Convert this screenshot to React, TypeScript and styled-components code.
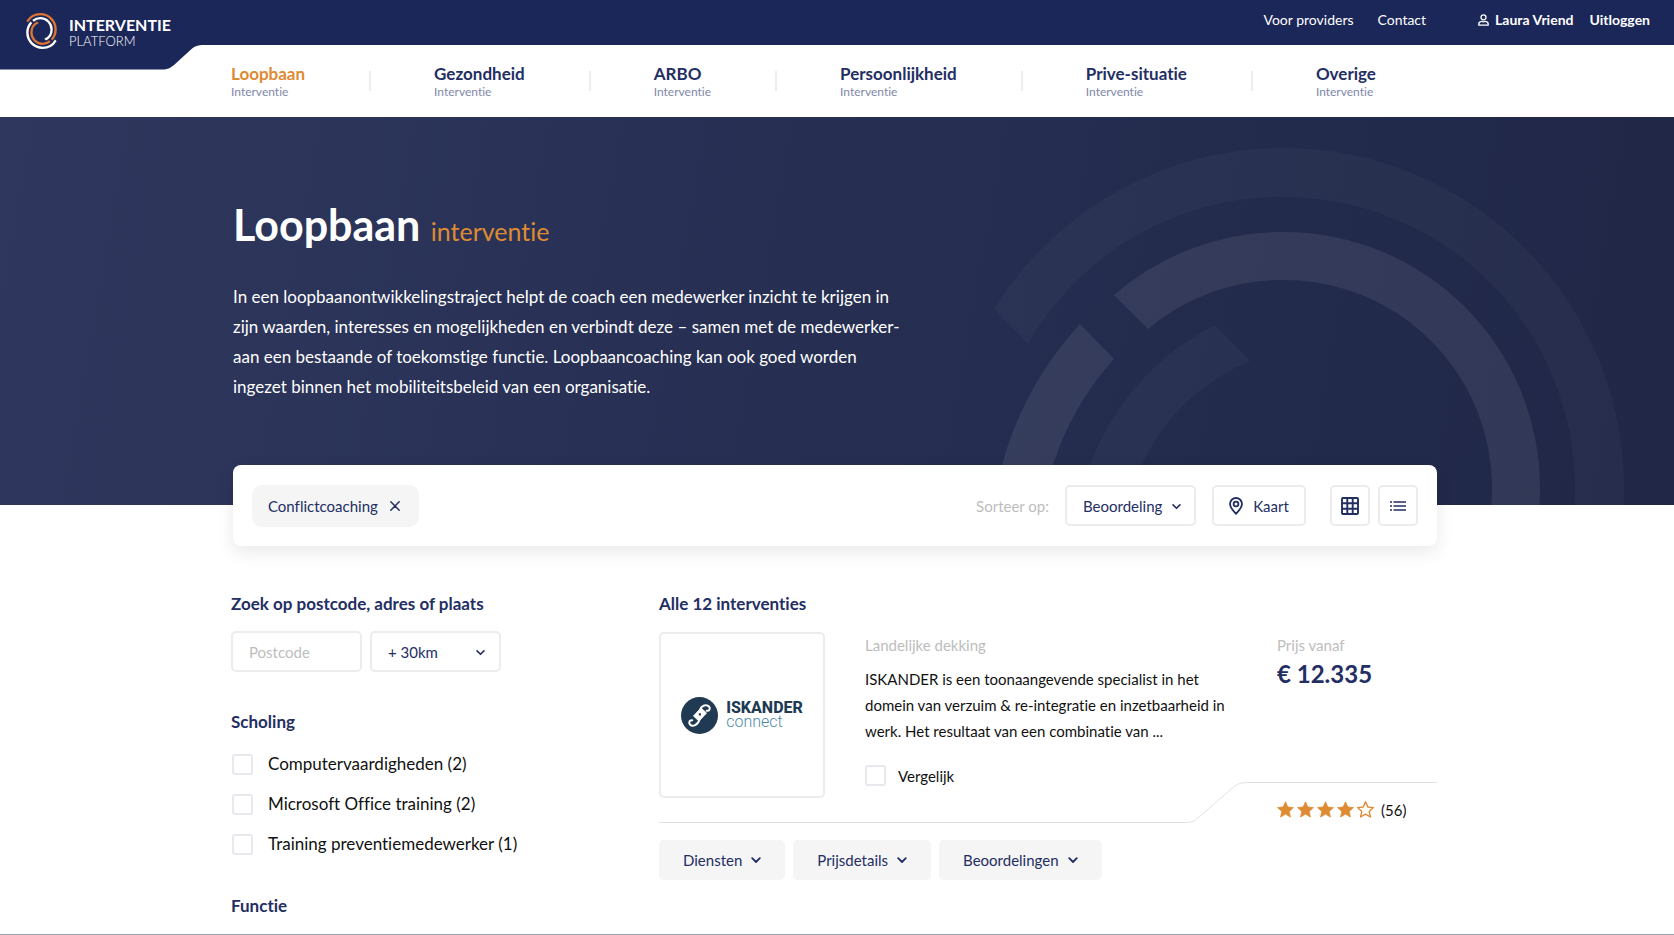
import React from 'react';
import styled, { createGlobalStyle } from 'styled-components';

const navy = '#1b2659';
const ink = '#232e63';
const orange = '#de8b33';
const muted = '#bdbdbd';
const line = '#ececee';
const soft = '#f5f5f5';

const GlobalStyle = createGlobalStyle`
  *, *::before, *::after { box-sizing: border-box; }
  body {
    margin: 0;
    background: #fff;
    color: #111;
    font-family: Lato, "Liberation Sans", sans-serif;
    font-size: 15px;
    line-height: 20px;
    font-variant-ligatures: none;
  }
  h1, h2, p, ul { margin: 0; padding: 0; }
  ul { list-style: none; }
  a { color: inherit; text-decoration: none; }
  button, input, select { font: inherit; color: inherit; margin: 0; }
  button, select { cursor: pointer; }
  svg { display: block; flex: none; }
`;

const Page = styled.div`
  min-height: 100vh;
  border-bottom: 1px solid #9aa2ab;
`;

/* ---------- header ---------- */

const TopBar = styled.header`
  position: relative;
  display: flex;
  justify-content: space-between;
  align-items: flex-start;
  height: 45px;
  padding: 0 24px 0 26px;
  background: ${navy};
  color: #fff;
`;

const TabShape = styled.svg`
  position: absolute;
  left: 0;
  top: 44px;
  fill: ${navy};
`;

const Brand = styled.a`
  position: relative;
  display: flex;
  align-items: flex-start;
  gap: 12px;
  padding-top: 13px;
`;

const BrandName = styled.span`
  display: flex;
  flex-direction: column;
  padding-top: 3px;
  font-size: 13px;
  line-height: 17px;
  font-weight: 300;
  strong {
    font-size: 16px;
    font-weight: 700;
  }
`;

const UserNav = styled.nav`
  display: flex;
  align-items: center;
  height: 40px;
  gap: 52px;
  font-size: 14px;
`;

const UserLinks = styled.div<{ $bold?: boolean }>`
  display: flex;
  gap: ${p => (p.$bold ? 16 : 24)}px;
  font-weight: ${p => (p.$bold ? 700 : 400)};
`;

const UserLink = styled.a`
  display: flex;
  align-items: center;
  gap: 6px;
`;

const MainNav = styled.nav`
  height: 72px;
  padding: 0 237px 0 231px;
  background: #fff;
`;

const NavList = styled.ul`
  display: flex;
  align-items: center;
  padding-top: 19px;
`;

const NavItem = styled.li`
  display: flex;
  align-items: center;
  &:not(:last-child)::after {
    content: '';
    width: 2px;
    height: 20px;
    margin: 0 63px 2px 64px;
    background: #ededed;
  }
`;

const NavLink = styled.a<{ $active?: boolean }>`
  display: flex;
  flex-direction: column;
  font-size: 17px;
  line-height: 20px;
  font-weight: 700;
  color: ${p => (p.$active ? orange : ink)};
  small {
    font-size: 12px;
    line-height: 16px;
    font-weight: 400;
    color: #7f88ab;
  }
`;

/* ---------- hero ---------- */

const Hero = styled.section`
  position: relative;
  overflow: hidden;
  padding: 82px 237px 103px 233px;
  background: linear-gradient(100deg, #2f375e 0%, #262f52 50%, #202747 100%);
  color: #fff;
`;

const HeroRings = styled.svg`
  position: absolute;
  right: 50px;
  top: 31px;
  width: 634px;
  height: 746px;
`;

const HeroBody = styled.div`
  position: relative;
  display: flex;
  flex-direction: column;
  gap: 31px;
`;

const HeroTitle = styled.h1`
  font-size: 43px;
  line-height: 52px;
  font-weight: 700;
  span {
    font-size: 25px;
    line-height: 30px;
    font-weight: 400;
    color: ${orange};
  }
`;

const HeroText = styled.p`
  max-width: 680px;
  font-size: 17px;
  line-height: 30px;
`;

/* ---------- filter bar ---------- */

const FilterBar = styled.section`
  position: relative;
  display: flex;
  align-items: center;
  justify-content: space-between;
  min-height: 81px;
  margin: -40px 237px 0 233px;
  padding: 0 19px;
  border-radius: 8px;
  background: #fff;
  box-shadow: 0 6px 18px rgba(0, 0, 0, 0.09);
`;

const Chip = styled.button`
  display: flex;
  align-items: center;
  gap: 12px;
  height: 42px;
  padding: 0 19px 0 16px;
  border: 0;
  border-radius: 10px;
  background: ${soft};
  color: ${ink};
`;

const SortGroup = styled.div`
  display: flex;
  align-items: center;
  gap: 16px;
`;

const SortLabel = styled.label`
  color: ${muted};
`;

const ViewGroup = styled.div`
  display: flex;
  gap: 8px;
  margin-left: 8px;
`;

const OutlineButton = styled.button<{ $square?: boolean }>`
  display: flex;
  align-items: center;
  justify-content: center;
  gap: 10px;
  width: ${p => (p.$square ? 40 : 94)}px;
  height: 41px;
  padding: 0;
  border: 2px solid ${line};
  border-radius: 5px;
  background: #fff;
  color: ${ink};
`;

const SelectWrap = styled.div<{ $chevronRight: number }>`
  position: relative;
  width: 131px;
  color: ${ink};
  svg {
    position: absolute;
    right: ${p => p.$chevronRight}px;
    top: 17px;
    pointer-events: none;
  }
`;

const Select = styled.select`
  appearance: none;
  width: 100%;
  height: 41px;
  padding: 0 16px;
  border: 2px solid ${line};
  border-radius: 5px;
  background: #fff;
`;

/* ---------- content ---------- */

const Content = styled.div`
  display: flex;
  padding: 46px 237px 0 231px;
`;

const Sidebar = styled.aside`
  flex: 0 0 428px;
`;

const Results = styled.main`
  flex: 1;
  min-width: 0;
`;

const Heading = styled.h2`
  font-size: 17px;
  line-height: 24px;
  font-weight: 700;
  color: ${ink};
`;

const LocationRow = styled.div`
  display: flex;
  gap: 8px;
  margin: 15px 0 38px;
`;

const TextInput = styled.input`
  width: 131px;
  height: 41px;
  padding: 0 16px;
  border: 2px solid ${line};
  border-radius: 5px;
  background: #fff;
  &::placeholder {
    color: ${muted};
    opacity: 1;
  }
`;

const CheckList = styled.ul`
  padding: 10px 0 30px 1px;
`;

const CheckLabel = styled.label<{ $compact?: boolean }>`
  display: flex;
  align-items: center;
  gap: ${p => (p.$compact ? 12 : 15)}px;
  height: ${p => (p.$compact ? 21 : 40)}px;
  font-size: ${p => (p.$compact ? 15 : 17)}px;
`;

const CheckBox = styled.input`
  appearance: none;
  width: 21px;
  height: 21px;
  border: 2px solid #e8e8ee;
  border-radius: 3px;
  background: #fff;
  &:checked {
    background: ${ink};
  }
`;

const Card = styled.article`
  margin-top: 16px;
`;

const CardTop = styled.div`
  display: flex;
`;

const LogoBox = styled.div`
  display: flex;
  align-items: center;
  justify-content: center;
  gap: 8px;
  flex: 0 0 166px;
  height: 166px;
  border: 2px solid ${line};
  border-radius: 5px;
  font-family: Roboto, sans-serif;
`;

const LogoName = styled.div`
  display: flex;
  flex-direction: column;
  font-size: 16px;
  line-height: 14px;
  font-weight: 300;
  color: #4f8ba6;
  strong {
    font-weight: 800;
    color: #203a54;
  }
`;

const Summary = styled.div`
  flex: 1;
  padding: 3px 40px 0;
`;

const Caption = styled.p`
  color: ${muted};
`;

const Description = styled.p`
  max-width: 370px;
  margin: 11px 0 21px;
  line-height: 26px;
`;

const PriceBlock = styled.div`
  flex: 0 0 160px;
  padding-top: 3px;
`;

const Price = styled.p`
  margin-top: 5px;
  font-size: 24px;
  line-height: 28px;
  font-weight: 700;
  color: ${ink};
`;

const CardFooter = styled.div`
  display: flex;
  height: 41px;
  margin-top: -16px;
  pointer-events: none;
`;

const FooterLine = styled.div`
  flex: 1;
  border-bottom: 1px solid #e2e2e2;
`;

const Rating = styled.div`
  display: flex;
  align-items: center;
  gap: 3px;
  flex: 0 0 188px;
  padding: 13px 0 0 28px;
  border-top: 1px solid #e2e2e2;
  span {
    margin-left: 4px;
  }
`;

const TabRow = styled.div`
  display: flex;
  gap: 8px;
  margin-top: 17px;
`;

const TabButton = styled.button`
  display: flex;
  align-items: center;
  gap: 9px;
  height: 40px;
  padding: 0 24px;
  border: 0;
  border-radius: 5px;
  background: ${soft};
  color: ${ink};
`;

/* ---------- drawings ---------- */

type RingProps = { outerA: string; innerA: string; outerB: string; innerB: string };

const OUTER_RING =
  'M994 309A340 340 0 0 1 1284 148A340 340 0 0 1 1624 488A340 340 0 0 1 1534 718' +
  'L1500 683A291 291 0 0 0 1575 488A291 291 0 0 0 1284 197A291 291 0 0 0 1028 344Z';
const INNER_RING =
  'M1114 295A256 256 0 0 1 1284 232A256 256 0 0 1 1540 488A256 256 0 0 1 1399 717' +
  'L1364 681A208 208 0 0 0 1492 488A208 208 0 0 0 1284 280A208 208 0 0 0 1148 329Z';

const Rings = ({ outerA, innerA, outerB, innerB }: RingProps) => (
  <>
    <path fill={outerA} d={OUTER_RING} />
    <path fill={innerA} d={INNER_RING} />
    <g transform="rotate(180 1307 521)">
      <path fill={outerB} d={OUTER_RING} />
      <path fill={innerB} d={INNER_RING} />
    </g>
  </>
);

const Chevron = ({ size = 10 }: { size?: number }) => (
  <svg width={size} height={size} viewBox="0 0 10 10" fill="none" stroke="currentColor" strokeWidth="1.8" strokeLinecap="round" strokeLinejoin="round" aria-hidden="true">
    <path d="M1.2 3.2 5 7l3.8-3.8" />
  </svg>
);

const STAR = 'M8.5 .8l2.3 5.2 5.6.6-4.2 3.8 1.2 5.6-4.9-2.9-4.9 2.9 1.2-5.6L.6 6.6 6.2 6Z';

const Star = ({ filled }: { filled: boolean }) => (
  <svg width="17" height="17" viewBox="0 0 17 17" stroke={orange} strokeLinejoin="round" strokeWidth={filled ? 0.8 : 1.4} fill={filled ? orange : 'none'} aria-hidden="true">
    <path d={STAR} />
  </svg>
);

const categories = ['Loopbaan', 'Gezondheid', 'ARBO', 'Persoonlijkheid', 'Prive-situatie', 'Overige'];
const trainings = ['Computervaardigheden (2)', 'Microsoft Office training (2)', 'Training preventiemedewerker (1)'];
const details = ['Diensten', 'Prijsdetails', 'Beoordelingen'];

export default function App() {
  return (
    <Page>
      <GlobalStyle />
      <TopBar>
        <TabShape width="206" height="26" viewBox="0 0 206 26" aria-hidden="true">
          <path d="M0 0H206V1H204C198 1 195 2 191 5.500L174 21C170 24 168 25.500 162 25.500H0Z" />
        </TabShape>
        <Brand href="#">
          <svg width="31" height="36" viewBox="990 148 634 746" aria-hidden="true">
            <Rings outerA="#e0742e" innerA="#fff" outerB="#fff" innerB="#e0742e" />
          </svg>
          <BrandName><strong>INTERVENTIE</strong>PLATFORM</BrandName>
        </Brand>
        <UserNav aria-label="Account">
          <UserLinks>
            <UserLink href="#">Voor providers</UserLink>
            <UserLink href="#">Contact</UserLink>
          </UserLinks>
          <UserLinks $bold>
            <UserLink href="#">
              <svg width="11" height="12" viewBox="0 0 11 12" fill="none" stroke="currentColor" strokeWidth="1.3" aria-hidden="true">
                <circle cx="5.500" cy="3.300" r="2.500" />
                <path d="M3.600 7.300C1.800 7.600.8 8.600.8 10v1.200h9.400V10c0-1.400-1-2.400-2.800-2.700-1.200.7-2.600.7-3.800 0Z" strokeLinejoin="round" />
              </svg>
              Laura Vriend
            </UserLink>
            <UserLink href="#">Uitloggen</UserLink>
          </UserLinks>
        </UserNav>
      </TopBar>

      <MainNav aria-label="Interventies">
        <NavList>
          {categories.map((name, i) => (
            <NavItem key={name}>
              <NavLink href="#" $active={i === 0}>
                {name}
                <small>Interventie</small>
              </NavLink>
            </NavItem>
          ))}
        </NavList>
      </MainNav>

      <Hero>
        <HeroRings viewBox="990 148 634 746" aria-hidden="true">
          <Rings
            outerA="rgba(255,255,255,.03)"
            innerA="rgba(255,255,255,.08)"
            outerB="rgba(255,255,255,.08)"
            innerB="rgba(255,255,255,.03)"
          />
        </HeroRings>
        <HeroBody>
          <HeroTitle>Loopbaan <span>interventie</span></HeroTitle>
          <HeroText>
            In een loopbaanontwikkelingstraject helpt de coach een medewerker inzicht te krijgen in
            zijn waarden, interesses en mogelijkheden en verbindt deze – samen met de medewerker-
            aan een bestaande of toekomstige functie. Loopbaancoaching kan ook goed worden
            ingezet binnen het mobiliteitsbeleid van een organisatie.
          </HeroText>
        </HeroBody>
      </Hero>

      <FilterBar>
        <Chip type="button">
          Conflictcoaching
          <svg width="10" height="10" viewBox="0 0 10 10" stroke="currentColor" strokeWidth="1.5" strokeLinecap="round" aria-hidden="true">
            <path d="M.8.8l8.400 8.400M9.200.8.8 9.200" />
          </svg>
        </Chip>
        <SortGroup>
          <SortLabel htmlFor="sort">Sorteer op:</SortLabel>
          <SelectWrap $chevronRight={15}>
            <Select id="sort" defaultValue="Beoordeling">
              <option>Beoordeling</option>
              <option>Prijs</option>
            </Select>
            <Chevron size={9} />
          </SelectWrap>
          <OutlineButton type="button">
            <svg width="14" height="18" viewBox="0 0 14 18" fill="none" stroke="currentColor" strokeWidth="1.800" aria-hidden="true">
              <path d="M7 16.800C4.500 14.200 1 10.400 1 7a6 6 0 0 1 12 0c0 3.400-3.500 7.200-6 9.800Z" strokeLinejoin="round" />
              <circle cx="7" cy="7" r="2.400" />
            </svg>
            Kaart
          </OutlineButton>
          <ViewGroup>
            <OutlineButton type="button" $square aria-label="Raster">
              <svg width="18" height="18" viewBox="0 0 18 18" fill="none" stroke="currentColor" strokeWidth="1.900" aria-hidden="true">
                <rect x="1" y="1" width="16" height="16" rx="1" />
                <path d="M6.300 1v16M11.700 1v16M1 6.300h16M1 11.700h16" />
              </svg>
            </OutlineButton>
            <OutlineButton type="button" $square aria-label="Lijst">
              <svg width="16" height="10" viewBox="0 0 16 10" stroke="currentColor" strokeWidth="1.600" aria-hidden="true">
                <path d="M0 1h2M0 5h2M0 9h2M3.500 1H16M3.500 5H16M3.500 9H16" />
              </svg>
            </OutlineButton>
          </ViewGroup>
        </SortGroup>
      </FilterBar>

      <Content>
        <Sidebar>
          <Heading>Zoek op postcode, adres of plaats</Heading>
          <LocationRow>
            <TextInput type="text" placeholder="Postcode" aria-label="Postcode" />
            <SelectWrap $chevronRight={16}>
              <Select aria-label="Afstand" defaultValue="+ 30km">
                <option>+ 30km</option>
                <option>+ 50km</option>
              </Select>
              <Chevron size={9} />
            </SelectWrap>
          </LocationRow>
          <Heading>Scholing</Heading>
          <CheckList>
            {trainings.map(name => (
              <li key={name}>
                <CheckLabel>
                  <CheckBox type="checkbox" />
                  {name}
                </CheckLabel>
              </li>
            ))}
          </CheckList>
          <Heading>Functie</Heading>
        </Sidebar>

        <Results>
          <Heading>Alle 12 interventies</Heading>
          <Card>
            <CardTop>
              <LogoBox>
                <svg width="37" height="37" viewBox="0 0 37 37" aria-hidden="true">
                  <circle cx="18.500" cy="18.500" r="18.500" fill="#203a54" />
                  <path d="M12.500 19l7.500-8 5.500 5-7.500 8Z" fill="#fff" stroke="#fff" strokeWidth="1" strokeLinejoin="round" />
                  <path d="M19 12.500C20.500 8.500 25.500 7 28 9.500c1.800 2.200 0 4.800-2.200 4.200M18.500 22.500C17 28 11.500 30.300 9 27.500c-1.800-2.200 0-4.800 2.200-4.200" fill="none" stroke="#fff" strokeWidth="2" strokeLinecap="round" />
                  <rect x="17.800" y="16.300" width="2.200" height="2.200" fill="#203a54" />
                </svg>
                <LogoName><strong>ISKANDER</strong>connect</LogoName>
              </LogoBox>
              <Summary>
                <Caption>Landelijke dekking</Caption>
                <Description>
                  ISKANDER is een toonaangevende specialist in het domein van verzuim &amp; re-integratie
                  en inzetbaarheid in werk. Het resultaat van een combinatie van ...
                </Description>
                <CheckLabel $compact>
                  <CheckBox type="checkbox" />
                  Vergelijk
                </CheckLabel>
              </Summary>
              <PriceBlock>
                <Caption>Prijs vanaf</Caption>
                <Price>€ 12.335</Price>
              </PriceBlock>
            </CardTop>
            <CardFooter>
              <FooterLine />
              <svg width="64" height="41" viewBox="0 0 64 41" fill="none" stroke="#e2e2e2" aria-hidden="true">
                <path d="M0 40.500C7 40.500 9 39.500 14 35L48 5.500C53 1.500 56 .5 64 .5" />
              </svg>
              <Rating aria-label="4 van 5 sterren">
                {[1, 2, 3, 4, 5].map(n => <Star key={n} filled={n < 5} />)}
                <span>(56)</span>
              </Rating>
            </CardFooter>
            <TabRow>
              {details.map(name => (
                <TabButton key={name} type="button">
                  {name}
                  <Chevron />
                </TabButton>
              ))}
            </TabRow>
          </Card>
        </Results>
      </Content>
    </Page>
  );
}
